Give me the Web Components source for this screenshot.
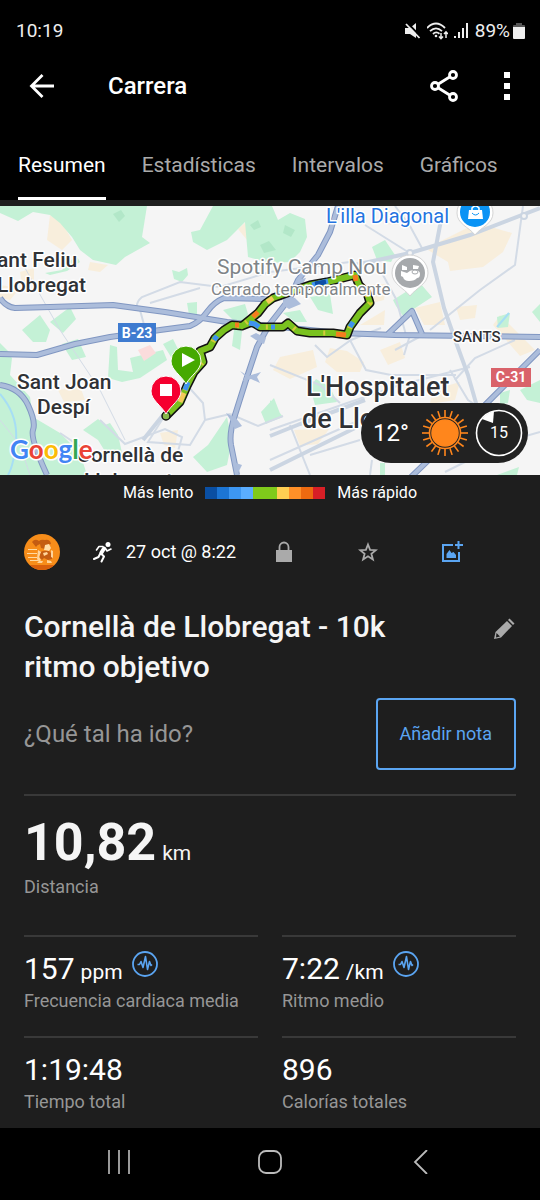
<!doctype html>
<html lang="es">
<head>
    <meta charset="utf-8">
    <meta name="viewport" content="width=device-width, initial-scale=1">
    <title>Carrera</title>

    <style type="text/css">
        html {
            background: #000;
        }

        body {
            margin: 0;
            background: #1e1e1e;
            color: #fff;
            font-family: Roboto, "Liberation Sans", sans-serif;
            font-size: 18px;
            line-height: 24px;
        }

        main {
            padding: 0 24px;
        }

        .stats {
            display: grid;
            grid-template-columns: 1fr 1fr;
            gap: 9px 24px;
        }
    </style>
</head>
<body>
    <status-bar time="10:19" battery="89%"></status-bar>
    <app-bar>Carrera</app-bar>
    <tab-strip tabs="Resumen,Estadísticas,Intervalos,Gráficos"></tab-strip>
    <route-map>
        <weather-pill temperature="12°" wind="15"></weather-pill>
    </route-map>
    <pace-legend>
        <span slot="slow">Más lento</span>
        <span slot="fast">Más rápido</span>
    </pace-legend>
    <main>
        <activity-meta>27 oct @ 8:22</activity-meta>
        <activity-title>Cornellà de Llobregat - 10k ritmo objetivo</activity-title>
        <note-prompt action="Añadir nota">¿Qué tal ha ido?</note-prompt>
        <stat-item size="large" unit="km" label="Distancia">10,82</stat-item>
        <div class="stats">
            <stat-item unit="ppm" label="Frecuencia cardiaca media" chart>157</stat-item>
            <stat-item unit="/km" label="Ritmo medio" chart>7:22</stat-item>
            <stat-item label="Tiempo total">1:19:48</stat-item>
            <stat-item label="Calorías totales">896</stat-item>
        </div>
    </main>
    <system-nav></system-nav>
</body>
<script>
    (function(window, document, undefined) {

        const buttonReset = `
            button {
                display: flex;
                align-items: center;
                justify-content: center;
                margin: 0;
                padding: 0;
                border: 0;
                background: none;
                color: inherit;
                font: inherit;
                cursor: pointer;
            }

            svg {
                display: block;
            }
        `;

        class BaseElement extends HTMLElement {
            connectedCallback() {
                if (this.shadowRoot) {
                    return;
                }
                const root = this.attachShadow({mode: 'open'});
                root.innerHTML = `<style>${buttonReset}${this.styles()}</style>${this.render()}`;
            }
        }

        class StatusBar extends BaseElement {
            styles() {
                return `
                    :host {
                        display: flex;
                        align-items: center;
                        justify-content: space-between;
                        height: 62px;
                        padding: 0 15px 0 16px;
                        background: #000;
                        color: #eee;
                        font-size: 19px;
                    }

                    .icons {
                        display: flex;
                        align-items: center;
                        gap: 6px;
                    }

                    .battery {
                        display: flex;
                        align-items: center;
                        gap: 3px;
                    }
                `;
            }

            render() {
                return `
                    <span>${this.getAttribute('time')}</span>
                    <div class="icons">
                        <svg width="16" height="16" viewBox="0 0 16 16" fill="#eee">
                            <path d="M0 5h5l6-5v15L5 11H0z"/>
                            <path d="M2.500 0l14 14.500" stroke="#000" stroke-width="2"/>
                            <path d="M1 1l13.500 14" stroke="#eee" stroke-width="1.800"/>
                        </svg>
                        <svg width="21" height="18" viewBox="0 0 21 18" fill="none" stroke="#eee" stroke-width="1.800">
                            <path d="M0 6Q9-3 18 6M3 9.200Q9 3.500 15 9.200M6 12q3-3 6.500-.3"/>
                            <circle cx="9" cy="14" r="1.300" fill="#eee" stroke="none"/>
                            <path d="M14 11v6M12 14.500l2 2.200 2-2.200M19 16v-6M17 12l2-2.200 2 2.200" stroke-width="1.500"/>
                        </svg>
                        <svg width="15" height="16" viewBox="0 0 15 16" fill="#eee">
                            <path d="M0 13h2v2H0zM4 9h2v6H4zM8 5h2v10H8zM12 0h2v15h-2z"/>
                        </svg>
                        <div class="battery">
                            <span>${this.getAttribute('battery')}</span>
                            <svg width="12" height="18" viewBox="0 0 12 18">
                                <path d="M3 1h6v2h2a1 1 0 0 1 1 1v3H0V4a1 1 0 0 1 1-1h2z" fill="#555"/>
                                <path d="M0 5h12v11a1 1 0 0 1-1 1H1a1 1 0 0 1-1-1z" fill="#eee"/>
                            </svg>
                        </div>
                    </div>
                `;
            }
        }

        class AppBar extends BaseElement {
            styles() {
                return `
                    :host {
                        display: flex;
                        align-items: center;
                        height: 48px;
                        padding: 0 9px 0 18px;
                        background: #000;
                    }

                    h1 {
                        flex: 1;
                        margin: 0 0 0 42px;
                        font-size: 24px;
                        font-weight: 500;
                        line-height: 32px;
                    }

                    button {
                        width: 48px;
                        height: 48px;
                    }

                    .share {
                        margin-right: 15px;
                    }
                `;
            }

            render() {
                return `
                    <button aria-label="Atrás">
                        <svg width="26" height="26" viewBox="0 0 26 26" fill="none" stroke="#fff" stroke-width="2.800">
                            <path d="M25 13H3M13.500 2L2.500 13l11 11"/>
                        </svg>
                    </button>
                    <h1><slot></slot></h1>
                    <button class="share" aria-label="Compartir">
                        <svg width="28" height="32" viewBox="0 0 28 32" fill="none" stroke="#fff" stroke-width="2.800">
                            <circle cx="5" cy="16" r="3.500"/>
                            <circle cx="23" cy="5" r="3.500"/>
                            <circle cx="23" cy="27" r="3.500"/>
                            <path d="M8 14.200L20 6.800M8 17.800l12 7.400"/>
                        </svg>
                    </button>
                    <button aria-label="Más opciones">
                        <svg width="6" height="28" viewBox="0 0 6 28" fill="#fff">
                            <path d="M0 0h6v6H0zM0 11h6v6H0zM0 22h6v6H0z"/>
                        </svg>
                    </button>
                `;
            }
        }

        class TabStrip extends BaseElement {
            styles() {
                return `
                    :host {
                        display: block;
                        padding-top: 20px;
                        background: #000;
                    }

                    nav {
                        display: flex;
                        gap: 36px;
                        padding: 0 18px;
                        border-bottom: 6px solid #1e1e1e;
                    }

                    button {
                        height: 70px;
                        border-top: 3px solid transparent;
                        border-bottom: 3px solid transparent;
                        color: #aaa;
                        font-size: 21px;
                    }

                    button[aria-selected="true"] {
                        border-bottom-color: #fff;
                        color: #fff;
                    }
                `;
            }

            render() {
                const tabs = this.getAttribute('tabs').split(',');
                return `<nav role="tablist">${tabs.map((tab, i) =>
                    `<button role="tab" aria-selected="${i === 0}">${tab}</button>`
                ).join('')}</nav>`;
            }
        }

        class RouteMap extends BaseElement {
            styles() {
                return `
                    :host {
                        display: block;
                        position: relative;
                    }

                    .map {
                        width: 100%;
                        height: auto;
                    }

                    text {
                        fill: #303236;
                        stroke: #fff;
                        stroke-width: 3px;
                        stroke-linejoin: round;
                        paint-order: stroke;
                        font-size: 21px;
                        font-weight: 500;
                    }

                    .city {
                        font-size: 27px;
                    }

                    .poi {
                        fill: #808488;
                        font-weight: 400;
                    }

                    .small {
                        font-size: 17px;
                    }

                    .district {
                        font-size: 15px;
                    }

                    .shop {
                        fill: #2473e0;
                        font-size: 20px;
                        font-weight: 400;
                    }

                    .shield {
                        fill: #fff;
                        stroke: none;
                        font-size: 14px;
                        font-weight: 700;
                        text-anchor: middle;
                    }

                    .google {
                        font-family: Lato, sans-serif;
                        font-size: 26px;
                        font-weight: 700;
                    }

                    ::slotted(weather-pill) {
                        position: absolute;
                        right: 12px;
                        bottom: 12px;
                    }
                `;
            }

            render() {
                const route = 'M167 415L180 402 187 386 194 372 203 362 200 351 210 347 215 338 224 330 232 325 242 326 252 322 260 327 283 327 288 323 297 331 310 333 333 333 347 335 350 327 360 313 370 303 367 293 359 285 355 275 343 278 327 282 310 285 290 292 273 298 265 304 258 313 242 326';
                const highways = [
                    'M0 298Q6 307 15 308L50 307 113 305 165 312 227 322 290 328 340 333 395 335 540 337',
                    'M0 354L37 355 75 344 110 337 160 330 190 326Q200 322 207 312T224 298L262 299 282 297',
                    'M237 475L231 445Q229 433 235 415L247 377 257 347 269 325 290 298 298 280 318 255 330 232 338 206',
                    'M0 385Q20 388 28 405T33 430 47 475',
                    'M388 334L412 311 422 334',
                    'M410 478L470 420 540 350'
                ];
                return `
                    <svg class="map" viewBox="0 206 540 269" role="img" aria-label="Mapa del recorrido">
                        <path fill="#f5f5f5" d="M0 206h540v269H0z"/>

                        <g fill="#f8eedc">
                            <path d="M50 215L62 223 72 240 62 250 47 240zM90 262L108 265 100 272 88 270zM437 243L477 223 512 233 503 252 483 267 450 271 448 262 428 250z"/>
                            <path d="M280 357L313 350 317 367 290 379 273 370zM330 348L347 351 364 362 360 372 337 372 325 362zM58 390L80 386 85 400 64 402z"/>
                            <path d="M380 209L405 214 398 225 383 224zM415 308L440 302 445 325 424 325zM456 307L477 305 475 318 460 320zM360 285L386 284 384 300 372 303z"/>
                            <path d="M294 430L330 428 318 444 300 446zM0 285L20 288 10 300 0 298zM20 272L34 268 34 282 22 284zM160 433L178 430 175 448 164 445zM238 229L246 222 247 240zM360 325L385 310 384 325zM380 350L400 342 405 358 388 365zM500 315L535 350 520 356 493 325zM432 390L460 382 455 400 430 404z"/>
                        </g>

                        <g fill="#c4f1d6">
                            <path d="M0 206H147L142 237 150 243 125 257 116 265 93 260 80 250 72 237 60 223 50 215 33 212 18 221 0 213z"/>
                            <path d="M213 206H272L278 220 290 213 305 219 307 237 300 252 290 262 270 263 248 257 245 222 227 240 207 250 193 242 191 232 200 230z"/>
                            <path d="M45 273L62 270 76 255 80 262 67 271 50 275zM172 270L179 272 187 268 188 275 182 282 174 279zM22 330L40 315 50 330 46 342 33 342zM50 322L70 307 76 319 63 333zM187 303L197 302 197 314 189 315z"/>
                            <path d="M223 310L245 304 248 314 243 322 240 350 232 346 235 322zM372 247L385 240 395 255 391 262 377 260zM393 300L420 283 432 297 403 316 396 306zM310 297L330 294 333 314 318 310zM283 313L300 310 307 322 295 322zM497 317L510 313 508 327 498 328zM532 312l8-8v18z"/>
                            <path d="M110 345L117 347 118 370 133 372 130 358 163 350 167 360 140 378 122 382 108 378z"/>
                            <path d="M0 345L12 358 10 375 30 397 33 417 60 433 80 453 87 475H0z"/>
                            <path d="M83 430L98 419 105 425 110 423 118 435 123 457 106 453 98 440zM193 457L208 445 227 417 232 440 227 465 207 472zM270 400L283 417 270 422zM310 387L316 379 330 387 337 402 315 405zM500 393L510 390 508 403 500 405zM520 390L540 380V403L527 400zM261 412L274 398 281 416 266 424zM380 475h5v-12h-5zM497 475l22-8-2 8z"/>
                            <path d="M0 363v-20l13 13zM62 344l16-5 8 18-14 3zM163 344l10-5 6 12-8 6z"/>
                        </g>

                        <path fill="#fbdcdc" d="M138 350l12-5 6 8-12 8z"/>
                        <g fill="#b2e7c8">
                            <path d="M113 214l8-4 4 6-6 6zM250 225l8-5 3 7-7 3zM285 225l10 5-4 7-8-4zM260 245l9-4 7 9-12 3z"/>
                        </g>

                        <path fill="none" stroke="#a6def4" stroke-width="2" d="M0 394Q18 415 16 440T8 475M497 327l12-14"/>

                        <g fill="none" stroke="#d3dbe6" stroke-width="2">
                            <path d="M25 268L60 330 100 390 125 440M0 420L20 445 30 475" stroke-width="1"/>
                            <path d="M137 308Q136 302 142 297L180 282 220 287 270 272 350 262"/>
                            <path d="M140 310l6 22M150 303l50-15M185 383L203 403 205 420 190 445 148 442 165 415M205 420l25-6M230 414l28 12 25-10"/>
                            <path d="M365 225L408 252M395 206l15 20 13 24M383 275l13 24 10 36M395 350l28-15M315 345l12 12 24-17 30-12M350 340l16 30 25 5 65 0"/>
                            <path d="M523 206L515 265 480 290 430 330M455 380l20-22 40-18M270 430L350 402 400 385 470 367M270 460L360 420M290 425l20 50M310 455l50-15M372 460l-2 15M270 365l50 20 20 18M445 472l60-30 35-10"/>
                            <path d="M100 420l25 24 40-15 17 8-5 18M60 433l30 20M410 335l-6 20M450 370l18 30 30 20"/>
                        </g>

                        <g fill="none" stroke="#cbd5e2" stroke-width="4">
                            <path d="M350 266L410 253 470 235 540 208M442 215L433 262 444 308 457 345 468 375 478 410"/>
                            <path d="M143 440L163 415M270 436L300 424 365 400M270 470L355 428"/>
                        </g>
                        <g fill="#f5f5f5" stroke="#cbd5e2" stroke-width="2">
                            <circle cx="410" cy="253" r="3"/>
                            <circle cx="524" cy="216" r="3"/>
                        </g>

                        <g fill="none" stroke-linejoin="round">
                            ${highways.map(d => `<path d="${d}" stroke="#8197c2" stroke-width="6"/>`).join('')}
                            ${highways.map(d => `<path d="${d}" stroke="#acbddb" stroke-width="4"/>`).join('')}
                        </g>
                        <g fill="#acbddb">
                            <path d="M240 371l8 5 13-4-4 5 3 6-9-4-8 2 2-5zM250 336l6-3 10 5-2 6-8-4zM283 296l12 2 6 6-12 5-6-4zM296 280l10-2-6 12zM226 413l10 5 6 8-7 3-4-8zM236 463l6 2-4 8z"/>
                        </g>

                        <g fill="none" stroke-linejoin="round" stroke-linecap="round">
                            <path d="${route}" stroke="#111" stroke-width="9"/>
                            <path d="${route}" stroke="#7ac21f" stroke-width="6"/>
                        </g>
                        <g fill="none" stroke-width="5" stroke-linejoin="round">
                            <path stroke="#d5c93a" stroke-dasharray="2 29" d="${route}"/>
                            <path stroke="#3f93ef" d="M185 390l3-8M249 323l6 1 4 3M214 340l3-4M271 327h4M350 327l3-5M328 281l-16 4"/>
                            <path stroke="#0d4ea6" d="M326 282l-11 2"/>
                            <path stroke="#f57c1f" d="M336 334l10 1M356 281l-1-6M258 312l-5 5M235 325h4"/>
                            <path stroke="#f5c95c" d="M180 402l4-9M273 298l-6 4M364 291l4 5"/>
                        </g>
                        <circle cx="166" cy="416" r="4" fill="#86b84a" stroke="#111" stroke-width="1.500"/>

                        <text x="-3" y="267">ant Feliu</text>
                        <text x="-3" y="292">Llobregat</text>
                        <text x="17" y="389">Sant Joan</text>
                        <text x="37" y="414">Despí</text>
                        <text x="77" y="462">Cornellà de</text>
                        <text x="84" y="488">Llobregat</text>
                        <text class="city" x="306" y="396">L'Hospitalet</text>
                        <text class="city" x="302" y="428">de Llo</text>
                        <text class="district" x="453" y="342">SANTS</text>
                        <text class="shop" x="326" y="223">L'illa Diagonal</text>
                        <text class="poi" x="217" y="274">Spotify Camp Nou</text>
                        <text class="poi small" x="211" y="295">Cerrado temporalmente</text>

                        <path fill="#3e7bd0" d="M118 323h38v19h-38z"/>
                        <text class="shield" x="137" y="338">B-23</text>
                        <path fill="#d9626a" d="M491 368h40v19h-40z"/>
                        <text class="shield" x="511" y="382">C-31</text>

                        <g fill="#fff" stroke="#d4d4d4">
                            <path d="M457 213a18 18 0 0 1 36 0c0 11-12 14-18 22-6-8-18-11-18-22z"/>
                            <path d="M392 273a18 18 0 0 1 36 0c0 11-12 15-18 23-6-8-18-12-18-23z"/>
                        </g>
                        <circle cx="475" cy="212" r="15" fill="#0a93f5"/>
                        <circle cx="410" cy="273" r="15" fill="#a6a9ac"/>
                        <path fill="#fff" d="M469 210h13l1 9h-15z"/>
                        <path fill="none" stroke="#fff" stroke-width="1.500" d="M472 211v-3q3.500-4 7 0v3"/>
                        <path fill="none" stroke="#0a93f5" d="M472 213q3.500 4 7 0"/>
                        <g fill="#fff">
                            <path d="M402 265l5 2v3h-5zM413 265l6 1-1 3h-5z"/>
                            <path d="M401 271l6 2q3-3 7-3 6 0 6 4t-3 4q-2 3-8 3-5 0-6-4l-2-1z"/>
                            <ellipse cx="415" cy="272" rx="3" ry="2" fill="none" stroke="#a6a9ac"/>
                        </g>

                        <g stroke="#fff">
                            <path fill="#46a900" d="M171 361a15 15 0 0 1 30 0c0 9-10 14-15 23-5-9-15-14-15-23z"/>
                            <path fill="#f5002f" d="M151 391a15 15 0 0 1 30 0c0 9-10 14-15 23-5-9-15-14-15-23z"/>
                        </g>
                        <path fill="#fff" d="M182 353l13 7-13 7zM160 384h12v12h-12z"/>

                        <text class="google" x="10" y="459"><tspan fill="#4285f4">G</tspan><tspan fill="#ea4335">o</tspan><tspan fill="#fbbc05">o</tspan><tspan fill="#4285f4">g</tspan><tspan fill="#34a853">l</tspan><tspan fill="#ea4335">e</tspan></text>
                    </svg>
                    <slot></slot>
                `;
            }
        }

        class WeatherPill extends BaseElement {
            styles() {
                return `
                    :host {
                        display: flex;
                        align-items: center;
                        gap: 6px;
                        box-sizing: border-box;
                        height: 60px;
                        padding: 0 5px 0 12px;
                        border-radius: 30px;
                        background: #222;
                    }

                    .temperature {
                        width: 42px;
                        font-size: 24px;
                        line-height: 28px;
                    }

                    .wind {
                        display: grid;
                        place-items: center;
                        font-size: 16px;
                    }

                    .wind > * {
                        grid-area: 1 / 1;
                    }
                `;
            }

            render() {
                let rays = '';
                for (let i = 0; i < 20; i++) {
                    rays += `<path d="M24 1v7" transform="rotate(${i * 18} 24 24)"/>`;
                }
                return `
                    <span class="temperature">${this.getAttribute('temperature')}</span>
                    <svg width="48" height="48" viewBox="0 0 48 48" stroke="#ff861c" stroke-width="1.600">
                        ${rays}
                        <circle cx="24" cy="24" r="15.500" fill="none"/>
                        <circle cx="24" cy="24" r="13" fill="#ff861c"/>
                    </svg>
                    <div class="wind">
                        <svg width="48" height="48" viewBox="0 0 48 48">
                            <circle cx="24" cy="24" r="22.500" fill="none" stroke="#fff" stroke-width="1.600"/>
                            <path fill="#fff" d="M7 10Q12 4 19 2l-1 12z"/>
                        </svg>
                        <span>${this.getAttribute('wind')}</span>
                    </div>
                `;
            }
        }

        class PaceLegend extends BaseElement {
            styles() {
                return `
                    :host {
                        display: flex;
                        align-items: center;
                        justify-content: center;
                        gap: 12px;
                        height: 36px;
                        font-size: 16px;
                    }

                    .scale {
                        display: flex;
                    }

                    .scale i {
                        width: 12px;
                        height: 12px;
                    }
                `;
            }

            render() {
                const colors = ['#0a4fa3', '#1c75d4', '#3d97f2', '#5aadff', '#7fca1b',
                    '#7fca1b', '#ffce52', '#ff9028', '#ee6a10', '#d81f26'];
                return `
                    <slot name="slow"></slot>
                    <div class="scale">${colors.map(c => `<i style="background:${c}"></i>`).join('')}</div>
                    <slot name="fast"></slot>
                `;
            }
        }

        class ActivityMeta extends BaseElement {
            styles() {
                return `
                    :host {
                        display: flex;
                        align-items: center;
                        height: 36px;
                        padding: 23px 22px 0 0;
                    }

                    .runner {
                        margin: 0 12px 0 30px;
                    }

                    .actions {
                        display: flex;
                        margin-left: auto;
                        color: #aaa;
                    }

                    button {
                        width: 84px;
                        height: 36px;
                    }
                `;
            }

            render() {
                return `
                    <svg width="36" height="36" viewBox="0 0 36 36">
                        <defs>
                            <clipPath id="disc"><circle cx="18" cy="18" r="18"/></clipPath>
                        </defs>
                        <g clip-path="url(#disc)">
                            <path fill="#f78d1a" d="M0 0h36v36H0z"/>
                            <path fill="#d9600c" d="M0 31h36v5H0z"/>
                            <path fill="#ffd9a0" d="M4 15h9v1H4zM3 19h10v1H3zM4 23h9v1H4zM6 26h8v1H6z"/>
                            <path fill="#c45c12" d="M8 8q3-4 7-1 2-2 6-1 5-1 6 4l-4 1-2 4-4-1-1-4q-3 1-4 3z"/>
                            <path fill="#ffdca8" d="M21 11l4-1 2 4-2 3-5-1z"/>
                            <path fill="#c45c12" d="M16 19q2-3 9-2l3 3v5l-4 1-4-2-2 2-2-2z"/>
                            <path fill="#ffd49a" d="M14 16l3 2-2 5 2 3-2 2-2-3zM19 19l4-1 1 2-4 2zM27 16l2 1v7l-2-1zM15 27h4l-1 2h-5zM23 26l4 1 1 2h-5z"/>
                        </g>
                    </svg>
                    <svg class="runner" width="24" height="24" viewBox="0 0 24 24">
                        <circle cx="18" cy="4.500" r="2.500" fill="#fff"/>
                        <g fill="none" stroke="#fff" stroke-linecap="round" stroke-linejoin="round">
                            <path d="M14 8.500L11.500 12.500" stroke-width="4"/>
                            <path d="M13 6.500H9L6.500 10M15.500 8.500l1.500 2.500 4-2" stroke-width="1.600"/>
                            <path d="M10.500 13l-2 4L4 19M11 13.500l3 3-2.500 5" stroke-width="2"/>
                        </g>
                    </svg>
                    <span><slot></slot></span>
                    <div class="actions">
                        <button aria-label="Privacidad">
                            <svg width="16" height="22" viewBox="0 0 16 22">
                                <path d="M3.500 10V6a4.500 4.500 0 0 1 9 0v4" fill="none" stroke="currentColor" stroke-width="1.800"/>
                                <path d="M0 9h16v12H0z" fill="currentColor"/>
                            </svg>
                        </button>
                        <button aria-label="Favorito">
                            <svg width="20" height="20" viewBox="0 0 20 20" fill="none" stroke="currentColor" stroke-width="1.800">
                                <path d="M10 2.500l2.100 5.300 5.700.4-4.400 3.600 1.500 5.700-4.900-3.200-4.900 3.200 1.500-5.700L2.200 8.200l5.700-.4z"/>
                            </svg>
                        </button>
                        <button aria-label="Añadir foto">
                            <svg width="22" height="22" viewBox="0 0 22 22">
                                <path d="M12 4H2v16h16v-9" fill="none" stroke="#5ba5f2" stroke-width="2"/>
                                <path d="M17.500 0v8M14 4h8" stroke="#5ba5f2" stroke-width="2"/>
                                <path d="M5.500 17v-4l3-4 2 3 2-1 2.500 3v3z" fill="#5ba5f2"/>
                            </svg>
                        </button>
                    </div>
                `;
            }
        }

        class ActivityTitle extends BaseElement {
            styles() {
                return `
                    :host {
                        display: flex;
                        align-items: flex-start;
                        justify-content: space-between;
                        padding-top: 37px;
                    }

                    h2 {
                        max-width: 400px;
                        margin: 0;
                        color: #f5f5f5;
                        font-size: 30px;
                        font-weight: 500;
                        line-height: 40px;
                    }

                    button {
                        width: 24px;
                        height: 44px;
                    }
                `;
            }

            render() {
                return `
                    <h2><slot></slot></h2>
                    <button aria-label="Editar título">
                        <svg width="22" height="22" viewBox="0 0 22 22">
                            <path d="M1 21l1.500-7L14 3l5 5L8 19.500z" fill="#aaa"/>
                            <path d="M15 2l1.500-1.500 5 5L20 7z" fill="#aaa"/>
                            <path d="M3.500 15l3.500 3.500-4 1z" fill="#1e1e1e"/>
                        </svg>
                    </button>
                `;
            }
        }

        class NotePrompt extends BaseElement {
            styles() {
                return `
                    :host {
                        display: flex;
                        align-items: center;
                        justify-content: space-between;
                        padding: 11px 0 24px;
                        border-bottom: 2px solid #393939;
                    }

                    p {
                        margin: 0;
                        color: #969696;
                        font-size: 24px;
                    }

                    button {
                        height: 72px;
                        padding: 0 22px;
                        border: 2px solid #5ba5f2;
                        border-radius: 4px;
                        color: #5ba5f2;
                    }
                `;
            }

            render() {
                return `
                    <p><slot></slot></p>
                    <button>${this.getAttribute('action')}</button>
                `;
            }
        }

        class StatItem extends BaseElement {
            styles() {
                return `
                    :host {
                        display: block;
                        padding: 12px 0 14px;
                        border-top: 2px solid #393939;
                    }

                    :host([size="large"]) {
                        padding: 15px 0 36px;
                        border-top: 0;
                    }

                    .value {
                        display: flex;
                        align-items: baseline;
                        gap: 6px;
                        font-size: 30px;
                        line-height: 40px;
                    }

                    :host([size="large"]) .value {
                        color: #f5f5f5;
                        font-size: 52px;
                        font-weight: 700;
                        line-height: 64px;
                    }

                    .unit {
                        font-size: 21px;
                        font-weight: 400;
                        line-height: 24px;
                    }

                    .label {
                        color: #969696;
                    }

                    button {
                        align-self: flex-start;
                        margin: 2px 0 0 3px;
                    }
                `;
            }

            render() {
                const unit = this.getAttribute('unit');
                const chart = `
                    <button aria-label="Ver gráfico">
                        <svg width="26" height="26" viewBox="0 0 26 26" fill="none" stroke="#5ba5f2">
                            <circle cx="13" cy="13" r="12" stroke-width="1.800"/>
                            <path d="M5.500 13.500h2l1.500-3 2 6 2.500-11 2 13 2-8 1.500 4 1-1" stroke-width="1.600" stroke-linejoin="round"/>
                        </svg>
                    </button>
                `;
                return `
                    <div class="value">
                        <span><slot></slot></span>
                        ${unit ? `<span class="unit">${unit}</span>` : ''}
                        ${this.hasAttribute('chart') ? chart : ''}
                    </div>
                    <div class="label">${this.getAttribute('label')}</div>
                `;
            }
        }

        class SystemNav extends BaseElement {
            styles() {
                return `
                    :host {
                        display: flex;
                        justify-content: center;
                        padding: 10px 0 14px;
                        background: #000;
                    }

                    button {
                        width: 28%;
                        height: 48px;
                    }
                `;
            }

            render() {
                return `
                    <button aria-label="Recientes">
                        <svg width="24" height="24" viewBox="0 0 24 24" stroke="#aaa" stroke-width="1.800">
                            <path d="M2 0v24M12 0v24M22 0v24"/>
                        </svg>
                    </button>
                    <button aria-label="Inicio">
                        <svg width="24" height="24" viewBox="0 0 24 24" fill="none" stroke="#bbb" stroke-width="1.800">
                            <rect x="1" y="1" width="22" height="22" rx="7"/>
                        </svg>
                    </button>
                    <button aria-label="Volver">
                        <svg width="24" height="24" viewBox="0 0 24 24" fill="none" stroke="#bbb" stroke-width="1.800">
                            <path d="M18 0L6 12l12 12"/>
                        </svg>
                    </button>
                `;
            }
        }

        window.customElements.define('status-bar', StatusBar);
        window.customElements.define('app-bar', AppBar);
        window.customElements.define('tab-strip', TabStrip);
        window.customElements.define('route-map', RouteMap);
        window.customElements.define('weather-pill', WeatherPill);
        window.customElements.define('pace-legend', PaceLegend);
        window.customElements.define('activity-meta', ActivityMeta);
        window.customElements.define('activity-title', ActivityTitle);
        window.customElements.define('note-prompt', NotePrompt);
        window.customElements.define('stat-item', StatItem);
        window.customElements.define('system-nav', SystemNav);
    })(window, document);
</script>
</html>
